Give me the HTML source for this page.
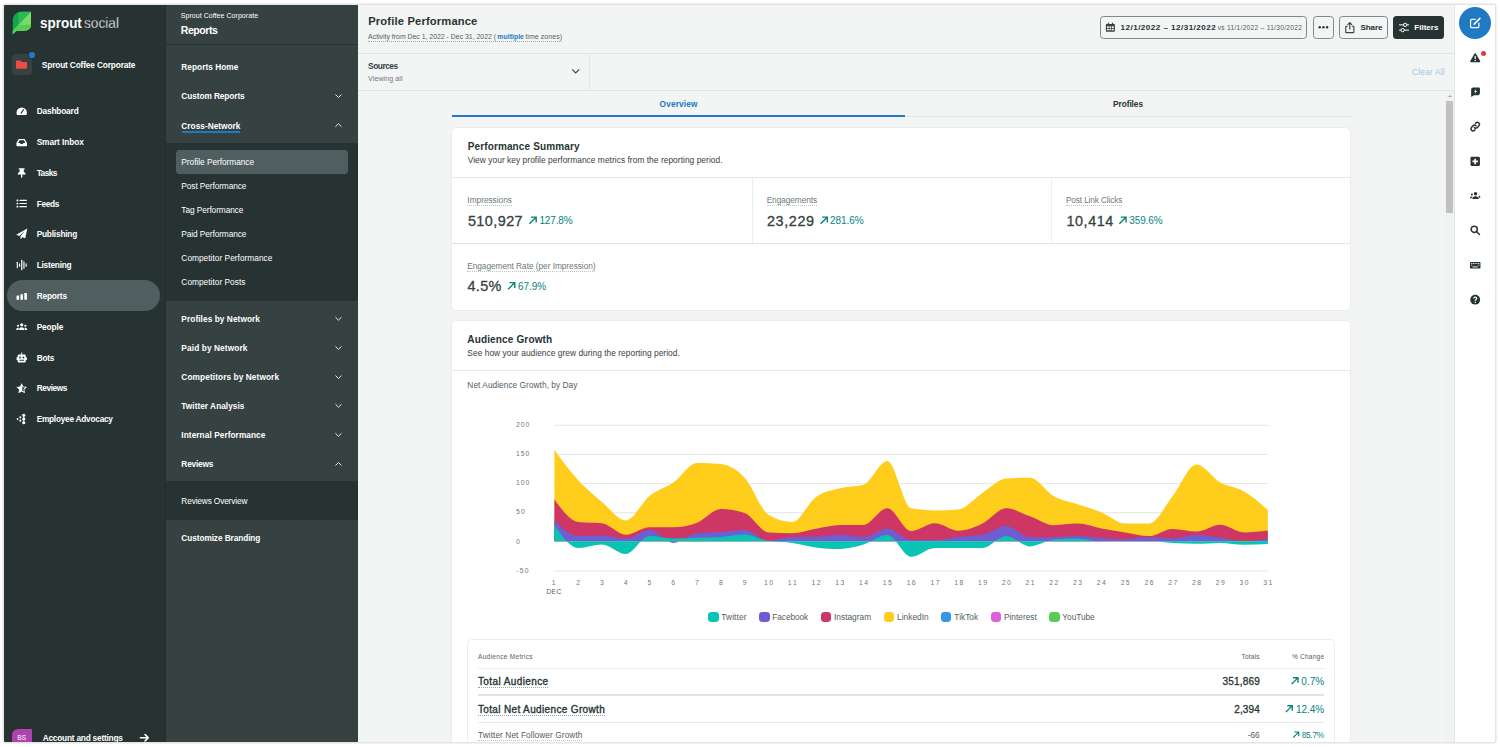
<!DOCTYPE html>
<html lang="en">
<head>
<meta charset="utf-8">
<title>Profile Performance - Sprout Social</title>
<style>
*{box-sizing:border-box}
html,body{margin:0;padding:0;background:#fff}
body{width:1500px;height:747px;overflow:hidden;position:relative;font-family:"Liberation Sans",sans-serif}
#app{position:absolute;left:4px;top:5px;width:1491px;height:737px;overflow:hidden;box-shadow:0 0 0 1.500px #e4e4e4;border-radius:1px}
#pg{position:absolute;left:-4px;top:-5px;width:1500px;height:747px}
#pg div{position:absolute}
.grp{position:static;display:block;margin:0;padding:0}
.t{position:absolute;white-space:pre;margin:0;padding:0;font-weight:400;font-style:normal;text-decoration:none;display:block}
.ic{position:absolute;overflow:visible}
.ul{position:absolute;height:0;border-top:1px dotted #a9b1b1}
.b{position:absolute}
.card{background:#fff;border:1px solid #e8ecec;border-radius:4.500px}
.hl{background:#dee1e1}
.btn{border:1px solid #7f8a8b;border-radius:3.500px}
.sw{position:absolute;width:10.400px;height:10.400px;border-radius:3.400px}
</style>
</head>
<body>
<div id="app"><div id="pg">
<header id="page-header" class="grp" aria-label="Page header">
<div class="b" style="left:358.00px;top:0.00px;width:1096.00px;height:747.00px;background:#f3f4f4;"></div>
<div class="b" style="left:358.00px;top:52.70px;width:1096.00px;height:1.00px;background:#e2e5e5;"></div>
<div class="b" style="left:358.00px;top:89.90px;width:1096.00px;height:1.00px;background:#e2e5e5;"></div>
<div class="b" style="left:588.80px;top:53.70px;width:1.00px;height:36.20px;background:#e3e6e6;"></div>
<svg class="ic" viewBox="0 0 11 11" style="left:571px;top:66px;width:11px;height:11px;"><g transform="translate(0.40 0.90) scale(0.5375 0.5375) translate(-0.00 -0.00)"><path fill="none" stroke="#364141" stroke-width="1.900" d="M1.500 4.800L8 11.200l6.500-6.400"/></g></svg>
<div class="b" style="left:368.40px;top:41.00px;width:193.30px;height:0.00px;background:transparent;border-top:1px dotted #a3acad"></div>
<div class="b btn" style="left:1100.40px;top:16.00px;width:207.10px;height:22.70px;background:transparent;"></div>
<div class="b btn" style="left:1312.70px;top:16.00px;width:21.40px;height:22.70px;background:transparent;"></div>
<div class="b btn" style="left:1339.00px;top:16.00px;width:48.70px;height:22.70px;background:transparent;"></div>
<div class="b" style="left:1393.20px;top:16.00px;width:50.80px;height:22.70px;background:#273333;border-radius:3.500px"></div>
<svg class="ic" viewBox="0 0 12 12" style="left:1105px;top:22px;width:12px;height:12px;"><g transform="translate(0.60 0.50) scale(0.6000 0.6000) translate(-0.00 -0.00)"><path fill="#364141" d="M3.500.5h2v2h5v-2h2v2h1.700c.7 0 1.300.6 1.300 1.300v10.400c0 .7-.6 1.300-1.300 1.300H1.800c-.7 0-1.300-.6-1.300-1.300V3.800c0-.7.600-1.300 1.300-1.300h1.700z"/><g fill="#f3f4f4"><rect x="2.300" y="6.300" width="3" height="2.800"/><rect x="6.500" y="6.300" width="3" height="2.800"/><rect x="10.700" y="6.300" width="3" height="2.800"/><rect x="2.300" y="10.300" width="3" height="2.800"/><rect x="6.500" y="10.300" width="3" height="2.800"/><rect x="10.700" y="10.300" width="3" height="2.800"/></g></g></svg>
<svg class="ic" viewBox="0 0 12 12" style="left:1318px;top:22px;width:12px;height:12px;"><g transform="translate(0.15 0.05) scale(0.6562 0.6562) translate(-0.00 -0.00)"><g fill="#273333"><circle cx="2.400" cy="8" r="1.800"/><circle cx="8" cy="8" r="1.800"/><circle cx="13.600" cy="8" r="1.800"/></g></g></svg>
<svg class="ic" viewBox="0 0 13 14" style="left:1344px;top:21px;width:13px;height:14px;"><g transform="translate(0.20 0.90) scale(0.7000 0.7000) translate(-0.00 -0.00)"><path fill="none" stroke="#364141" stroke-width="1.600" stroke-linejoin="round" d="M5 6.300H3.200c-.6 0-1 .4-1 1v7c0 .6.400 1 1 1h9.600c.6 0 1-.4 1-1v-7c0-.6-.4-1-1-1H11M8 11V1.500M4.800 4.300L8 1.100l3.200 3.200"/></g></svg>
<svg class="ic" viewBox="0 0 13 12" style="left:1398px;top:22px;width:13px;height:12px;"><g transform="translate(0.70 0.20) scale(0.6625 0.6625) translate(-0.00 -0.00)"><g fill="none" stroke="#fff" stroke-width="1.500"><path d="M0.500 4H15.500M0.500 12H15.500"/><circle cx="9.700" cy="4" r="2.500" fill="#273333"/><circle cx="6" cy="12" r="2.500" fill="#273333"/></g></g></svg>
<h1 class="t" style="left:368.25px;top:16px;font-size:11.2px;line-height:11.2px;color:#273333;font-weight:700;letter-spacing:0.154px;">Profile Performance</h1>
<span class="t" style="left:368.12px;top:34px;font-size:6.9px;line-height:6.9px;color:#515e5f;">Activity from Dec 1, 2022 - Dec 31, 2022 (</span>
<span class="t" style="left:497.32px;top:34px;font-size:6.9px;line-height:6.9px;color:#2079c3;font-weight:700;letter-spacing:0.028px;">multiple</span>
<span class="t" style="left:525.32px;top:34px;font-size:6.9px;line-height:6.9px;color:#515e5f;letter-spacing:0.110px;">time zones)</span>
<span class="t" style="left:368.07px;top:62px;font-size:8.3px;line-height:8.3px;color:#364141;font-weight:700;letter-spacing:-0.450px;">Sources</span>
<span class="t" style="left:368.12px;top:75px;font-size:7.0px;line-height:7.0px;color:#6e797a;letter-spacing:0.109px;">Viewing all</span>
<span class="t" style="left:1120.58px;top:24px;font-size:8.1px;line-height:8.1px;color:#273333;font-weight:700;letter-spacing:0.458px;">12/1/2022 – 12/31/2022</span>
<span class="t" style="left:1217.74px;top:25px;font-size:6.6px;line-height:6.6px;color:#515e5f;letter-spacing:0.290px;">vs 11/1/2022 – 11/30/2022</span>
<span class="t" style="left:1360.38px;top:24px;font-size:8.1px;line-height:8.1px;color:#273333;font-weight:700;letter-spacing:-0.093px;">Share</span>
<span class="t" style="left:1414.28px;top:24px;font-size:8.1px;line-height:8.1px;color:#ffffff;font-weight:700;letter-spacing:-0.011px;">Filters</span>
<span class="t" style="left:1412.07px;top:68px;font-size:8.3px;line-height:8.3px;color:#9fc6e4;letter-spacing:0.205px;">Clear All</span>
</header>
<main id="content" class="grp" aria-label="Report">
<div class="b" style="left:905.00px;top:115.60px;width:446.00px;height:1.00px;background:#e2e5e5;"></div>
<div class="b" style="left:452.00px;top:114.70px;width:453.00px;height:2.00px;background:#2079c3;"></div>
<div class="b" style="left:1445.00px;top:90.90px;width:9.00px;height:656.00px;background:#f1f2f2;"></div>
<div class="b" style="left:1446.20px;top:100.50px;width:7.00px;height:112.20px;background:#c1c1c1;"></div>
<div class="b" style="left:1447.50px;top:94.60px;width:0;height:0;border-left:2.200px solid transparent;border-right:2.200px solid transparent;border-bottom:2.600px solid #a3a3a3"></div>
<div class="b card" style="left:451.00px;top:127.00px;width:900.00px;height:184.00px;background:#fff;"></div>
<div class="b" style="left:452.00px;top:176.80px;width:898.00px;height:1.00px;background:#e6eaea;"></div>
<div class="b" style="left:452.00px;top:242.70px;width:898.00px;height:1.00px;background:#dfe6e6;"></div>
<div class="b" style="left:751.50px;top:177.80px;width:1.00px;height:65.00px;background:#eceff0;"></div>
<div class="b" style="left:1050.90px;top:177.80px;width:1.00px;height:65.00px;background:#eceff0;"></div>
<svg class="ic" viewBox="0 0 11 11" style="left:528px;top:215px;width:11px;height:11px;"><g transform="translate(0.40 0.70) scale(0.5750 0.5750) translate(-0.00 -0.00)"><path fill="none" stroke="#08837f" stroke-width="2.500" d="M1.800 14.200L13.300 2.700M4.300 2.500h9.200v9.200"/></g></svg>
<svg class="ic" viewBox="0 0 11 11" style="left:819px;top:215px;width:11px;height:11px;"><g transform="translate(0.60 0.70) scale(0.5750 0.5750) translate(-0.00 -0.00)"><path fill="none" stroke="#08837f" stroke-width="2.500" d="M1.800 14.200L13.300 2.700M4.300 2.500h9.200v9.200"/></g></svg>
<svg class="ic" viewBox="0 0 11 11" style="left:1118px;top:215px;width:11px;height:11px;"><g transform="translate(0.30 0.70) scale(0.5750 0.5750) translate(-0.00 -0.00)"><path fill="none" stroke="#08837f" stroke-width="2.500" d="M1.800 14.200L13.300 2.700M4.300 2.500h9.200v9.200"/></g></svg>
<svg class="ic" viewBox="0 0 11 11" style="left:507px;top:281px;width:11px;height:11px;"><g transform="translate(0.00 0.20) scale(0.5750 0.5750) translate(-0.00 -0.00)"><path fill="none" stroke="#08837f" stroke-width="2.500" d="M1.800 14.200L13.300 2.700M4.300 2.500h9.200v9.200"/></g></svg>
<div class="b card" style="left:451.00px;top:320.00px;width:900.00px;height:440.00px;background:#fff;"></div>
<div class="b" style="left:452.00px;top:369.80px;width:898.00px;height:1.00px;background:#e6eaea;"></div>
<svg class="chart" width="1500" height="747" viewBox="0 0 1500 747" style="position:absolute;left:0;top:0;pointer-events:none"><rect x="554" y="424.80" width="714" height="1" fill="#e4e7e7"/><rect x="554" y="453.95" width="714" height="1" fill="#e4e7e7"/><rect x="554" y="483.10" width="714" height="1" fill="#e4e7e7"/><rect x="554" y="512.20" width="714" height="1" fill="#e4e7e7"/><rect x="554" y="540.20" width="714" height="1" fill="#e4e7e7"/><rect x="554" y="570.50" width="714" height="1" fill="#e4e7e7"/><path d="M554.40,450.00C562.33,460.77 570.25,471.55 578.18,480.20C586.11,488.85 594.03,495.20 601.96,501.90C609.89,508.60 617.81,520.40 625.74,520.40C633.67,520.40 641.59,502.20 649.52,495.90C657.45,489.60 665.37,488.08 673.30,482.60C681.23,477.12 689.15,463.00 697.08,463.00C705.01,463.00 712.93,463.37 720.86,464.10C728.79,464.83 736.71,469.37 744.64,477.80C752.57,486.23 760.49,509.83 768.42,514.70C776.35,519.57 784.27,522.00 792.20,522.00C800.13,522.00 808.05,502.63 815.98,497.00C823.91,491.37 831.83,490.25 839.76,488.20C847.69,486.15 855.61,487.03 863.54,484.70C871.47,482.37 879.39,460.90 887.32,460.90C895.25,460.90 903.17,506.90 911.10,508.30C919.03,509.70 926.95,510.40 934.88,510.40C942.81,510.40 950.73,510.07 958.66,509.40C966.59,508.73 974.51,498.13 982.44,493.00C990.37,487.87 998.29,479.13 1006.22,478.60C1014.15,478.07 1022.07,477.80 1030.00,477.80C1037.93,477.80 1045.85,491.88 1053.78,496.30C1061.71,500.72 1069.63,501.63 1077.56,504.30C1085.49,506.97 1093.41,509.08 1101.34,512.30C1109.27,515.52 1117.19,523.60 1125.12,523.60C1133.05,523.60 1140.97,523.60 1148.90,523.60C1156.83,523.60 1164.75,506.13 1172.68,496.30C1180.61,486.47 1188.53,464.60 1196.46,464.60C1204.39,464.60 1212.31,478.13 1220.24,482.60C1228.17,487.07 1236.09,486.85 1244.02,491.40C1251.95,495.95 1259.87,502.92 1267.80,509.90L1267.80,541.25L554.40,541.25Z" fill="#ffcd1c"/><path d="M554.40,499.50C562.33,510.32 570.25,521.13 578.18,522.00C586.11,522.87 594.03,522.43 601.96,523.30C609.89,524.17 617.81,534.80 625.74,534.80C633.67,534.80 641.59,527.30 649.52,527.30C657.45,527.30 665.37,527.30 673.30,527.30C681.23,527.30 689.15,525.80 697.08,522.80C705.01,519.80 712.93,509.10 720.86,509.10C728.79,509.10 736.71,510.43 744.64,513.10C752.57,515.77 760.49,531.87 768.42,532.40C776.35,532.93 784.27,533.20 792.20,533.20C800.13,533.20 808.05,530.08 815.98,528.70C823.91,527.32 831.83,524.90 839.76,524.90C847.69,524.90 855.61,524.90 863.54,524.90C871.47,524.90 879.39,508.30 887.32,508.30C895.25,508.30 903.17,531.10 911.10,531.10C919.03,531.10 926.95,523.30 934.88,523.30C942.81,523.30 950.73,530.80 958.66,530.80C966.59,530.80 974.51,527.35 982.44,523.60C990.37,519.85 998.29,508.30 1006.22,508.30C1014.15,508.30 1022.07,513.48 1030.00,516.30C1037.93,519.12 1045.85,525.20 1053.78,525.20C1061.71,525.20 1069.63,523.60 1077.56,523.60C1085.49,523.60 1093.41,526.93 1101.34,528.40C1109.27,529.87 1117.19,531.12 1125.12,532.40C1133.05,533.68 1140.97,536.10 1148.90,536.10C1156.83,536.10 1164.75,528.90 1172.68,528.90C1180.61,528.90 1188.53,531.60 1196.46,531.60C1204.39,531.60 1212.31,524.70 1220.24,524.70C1228.17,524.70 1236.09,532.40 1244.02,532.40C1251.95,532.40 1259.87,531.45 1267.80,530.50L1267.80,541.25L554.40,541.25Z" fill="#cd3665"/><path d="M554.40,520.40C562.33,528.20 570.25,536.00 578.18,536.00C586.11,536.00 594.03,535.60 601.96,535.60C609.89,535.60 617.81,538.80 625.74,538.80C633.67,538.80 641.59,530.00 649.52,530.00C657.45,530.00 665.37,542.90 673.30,542.90C681.23,542.90 689.15,533.93 697.08,533.20C705.01,532.47 712.93,532.63 720.86,532.10C728.79,531.57 736.71,530.00 744.64,530.00C752.57,530.00 760.49,540.40 768.42,540.40C776.35,540.40 784.27,536.90 792.20,536.90C800.13,536.90 808.05,536.90 815.98,536.90C823.91,536.90 831.83,534.80 839.76,534.80C847.69,534.80 855.61,537.20 863.54,537.20C871.47,537.20 879.39,528.70 887.32,528.70C895.25,528.70 903.17,540.00 911.10,540.00C919.03,540.00 926.95,540.00 934.88,540.00C942.81,540.00 950.73,537.77 958.66,536.90C966.59,536.03 974.51,536.20 982.44,534.80C990.37,533.40 998.29,526.00 1006.22,526.00C1014.15,526.00 1022.07,537.20 1030.00,537.20C1037.93,537.20 1045.85,537.20 1053.78,537.20C1061.71,537.20 1069.63,536.10 1077.56,536.10C1085.49,536.10 1093.41,537.47 1101.34,538.00C1109.27,538.53 1117.19,539.30 1125.12,539.30C1133.05,539.30 1140.97,537.20 1148.90,537.20C1156.83,537.20 1164.75,538.40 1172.68,538.40C1180.61,538.40 1188.53,535.10 1196.46,535.10C1204.39,535.10 1212.31,536.67 1220.24,537.70C1228.17,538.73 1236.09,541.30 1244.02,541.30C1251.95,541.30 1259.87,540.05 1267.80,538.80L1267.80,541.25L554.40,541.25Z" fill="#6f5ed3"/><path d="M554.40,525.20C562.33,536.60 570.25,548.00 578.18,548.00C586.11,548.00 594.03,544.50 601.96,544.50C609.89,544.50 617.81,554.10 625.74,554.10C633.67,554.10 641.59,536.10 649.52,536.10C657.45,536.10 665.37,538.40 673.30,538.40C681.23,538.40 689.15,537.95 697.08,537.70C705.01,537.45 712.93,537.43 720.86,536.90C728.79,536.37 736.71,534.50 744.64,534.50C752.57,534.50 760.49,539.73 768.42,541.00C776.35,542.27 784.27,541.83 792.20,542.90C800.13,543.97 808.05,546.38 815.98,547.40C823.91,548.42 831.83,549.00 839.76,549.00C847.69,549.00 855.61,546.82 863.54,544.50C871.47,542.18 879.39,535.10 887.32,535.10C895.25,535.10 903.17,556.80 911.10,556.80C919.03,556.80 926.95,548.00 934.88,548.00C942.81,548.00 950.73,548.00 958.66,548.00C966.59,548.00 974.51,548.00 982.44,548.00C990.37,548.00 998.29,536.00 1006.22,536.00C1014.15,536.00 1022.07,546.40 1030.00,546.40C1037.93,546.40 1045.85,540.40 1053.78,539.60C1061.71,538.80 1069.63,538.40 1077.56,538.40C1085.49,538.40 1093.41,541.60 1101.34,541.60C1109.27,541.60 1117.19,541.00 1125.12,541.00C1133.05,541.00 1140.97,541.00 1148.90,541.00C1156.83,541.00 1164.75,542.45 1172.68,542.90C1180.61,543.35 1188.53,543.70 1196.46,543.70C1204.39,543.70 1212.31,542.90 1220.24,542.90C1228.17,542.90 1236.09,544.80 1244.02,544.80C1251.95,544.80 1259.87,544.45 1267.80,544.10L1267.80,541.25L554.40,541.25Z" fill="#08c4b2"/></svg>
<div class="sw" style="left:708.30px;top:612.00px;background:#08c4b2"></div>
<div class="sw" style="left:759.30px;top:612.00px;background:#6f5ed3"></div>
<div class="sw" style="left:820.70px;top:612.00px;background:#cd3665"></div>
<div class="sw" style="left:883.70px;top:612.00px;background:#ffcd1c"></div>
<div class="sw" style="left:941.00px;top:612.00px;background:#3896e3"></div>
<div class="sw" style="left:990.70px;top:612.00px;background:#db61db"></div>
<div class="sw" style="left:1049.30px;top:612.00px;background:#59cb59"></div>
<div class="b card" style="left:467.00px;top:639.00px;width:868.00px;height:120.00px;background:#fff;border-color:#ebeeee"></div>
<div class="b" style="left:478.30px;top:668.00px;width:845.40px;height:1.00px;background:#eceff0;"></div>
<div class="b" style="left:478.30px;top:694.40px;width:845.40px;height:1.30px;background:#dfe4e4;"></div>
<div class="b" style="left:478.30px;top:722.20px;width:845.40px;height:1.00px;background:#e6eaea;"></div>
<svg class="ic" viewBox="0 0 11 11" style="left:1290px;top:676px;width:11px;height:11px;"><g transform="translate(0.70 0.40) scale(0.5375 0.5375) translate(-0.00 -0.00)"><path fill="none" stroke="#08837f" stroke-width="2.500" d="M1.800 14.200L13.300 2.700M4.300 2.500h9.200v9.200"/></g></svg>
<svg class="ic" viewBox="0 0 10 11" style="left:1285px;top:704px;width:10px;height:11px;"><g transform="translate(0.00 0.40) scale(0.5375 0.5375) translate(-0.00 -0.00)"><path fill="none" stroke="#08837f" stroke-width="2.500" d="M1.800 14.200L13.300 2.700M4.300 2.500h9.200v9.200"/></g></svg>
<svg class="ic" viewBox="0 0 9 10" style="left:1292px;top:730px;width:9px;height:10px;"><g transform="translate(0.30 0.80) scale(0.4750 0.4750) translate(-0.00 -0.00)"><path fill="none" stroke="#08837f" stroke-width="2.500" d="M1.800 14.200L13.300 2.700M4.300 2.500h9.200v9.200"/></g></svg>
<span class="t" style="left:659.57px;top:100px;font-size:8.3px;line-height:8.3px;color:#2079c3;font-weight:700;letter-spacing:0.134px;">Overview</span>
<span class="t" style="left:1113.07px;top:100px;font-size:8.3px;line-height:8.3px;color:#273333;font-weight:700;letter-spacing:-0.070px;">Profiles</span>
<h2 class="t" style="left:467.70px;top:142px;font-size:10.0px;line-height:10.0px;color:#273333;font-weight:700;letter-spacing:0.128px;">Performance Summary</h2>
<span class="t" style="left:467.76px;top:156px;font-size:8.4px;line-height:8.4px;color:#364141;letter-spacing:0.039px;">View your key profile performance metrics from the reporting period.</span>
<span class="t" style="left:467.37px;top:196px;font-size:8.3px;line-height:8.3px;color:#6e797a;letter-spacing:-0.019px;">Impressions</span>
<i class="ul" style="left:467.40px;top:205.00px;width:44.40px;border-top-color:#bcc3c3"></i>
<span class="t" style="left:467.92px;top:214px;font-size:14.4px;line-height:14.4px;color:#364141;letter-spacing:0.444px;-webkit-text-stroke:0.3px #364141;">510,927</span>
<span class="t" style="left:539.40px;top:216px;font-size:10.0px;line-height:10.0px;color:#08837f;letter-spacing:-0.144px;">127.8%</span>
<span class="t" style="left:766.67px;top:196px;font-size:8.3px;line-height:8.3px;color:#6e797a;letter-spacing:-0.066px;">Engagements</span>
<i class="ul" style="left:766.70px;top:205.00px;width:50.40px;border-top-color:#bcc3c3"></i>
<span class="t" style="left:766.92px;top:214px;font-size:14.4px;line-height:14.4px;color:#364141;letter-spacing:0.616px;-webkit-text-stroke:0.3px #364141;">23,229</span>
<span class="t" style="left:830.00px;top:216px;font-size:10.0px;line-height:10.0px;color:#08837f;letter-spacing:-0.044px;">281.6%</span>
<span class="t" style="left:1065.97px;top:196px;font-size:8.3px;line-height:8.3px;color:#6e797a;letter-spacing:-0.148px;">Post Link Clicks</span>
<i class="ul" style="left:1066.00px;top:205.00px;width:56.20px;border-top-color:#bcc3c3"></i>
<span class="t" style="left:1066.42px;top:214px;font-size:14.4px;line-height:14.4px;color:#364141;letter-spacing:0.576px;-webkit-text-stroke:0.3px #364141;">10,414</span>
<span class="t" style="left:1129.20px;top:216px;font-size:10.0px;line-height:10.0px;color:#08837f;letter-spacing:-0.084px;">359.6%</span>
<span class="t" style="left:467.17px;top:262px;font-size:8.3px;line-height:8.3px;color:#6e797a;letter-spacing:-0.037px;">Engagement Rate (per Impression)</span>
<i class="ul" style="left:467.20px;top:270.90px;width:128.30px;border-top-color:#bcc3c3"></i>
<span class="t" style="left:467.42px;top:279px;font-size:14.4px;line-height:14.4px;color:#364141;letter-spacing:0.361px;-webkit-text-stroke:0.3px #364141;">4.5%</span>
<span class="t" style="left:517.90px;top:282px;font-size:10.0px;line-height:10.0px;color:#08837f;letter-spacing:-0.040px;">67.9%</span>
<h2 class="t" style="left:467.30px;top:335px;font-size:10.0px;line-height:10.0px;color:#273333;font-weight:700;letter-spacing:0.150px;">Audience Growth</h2>
<span class="t" style="left:467.36px;top:349px;font-size:8.4px;line-height:8.4px;color:#364141;letter-spacing:0.027px;">See how your audience grew during the reporting period.</span>
<h3 class="t" style="left:467.37px;top:381px;font-size:8.3px;line-height:8.3px;color:#515e5f;letter-spacing:0.046px;">Net Audience Growth, by Day</h3>
<span class="t" style="left:515.93px;top:422px;font-size:6.8px;line-height:6.8px;color:#6e797a;letter-spacing:0.984px;">200</span>
<span class="t" style="left:515.93px;top:451px;font-size:6.8px;line-height:6.8px;color:#6e797a;letter-spacing:0.984px;">150</span>
<span class="t" style="left:515.93px;top:480px;font-size:6.8px;line-height:6.8px;color:#6e797a;letter-spacing:0.984px;">100</span>
<span class="t" style="left:515.93px;top:509px;font-size:6.8px;line-height:6.8px;color:#6e797a;letter-spacing:1.350px;">50</span>
<span class="t" style="left:515.93px;top:539px;font-size:6.8px;line-height:6.8px;color:#6e797a;">0</span>
<span class="t" style="left:516.23px;top:568px;font-size:6.8px;line-height:6.8px;color:#6e797a;letter-spacing:1.192px;">-50</span>
<span class="t" style="left:551.83px;top:580px;font-size:6.8px;line-height:6.8px;color:#6e797a;">1</span>
<span class="t" style="left:576.21px;top:580px;font-size:6.8px;line-height:6.8px;color:#6e797a;">2</span>
<span class="t" style="left:599.99px;top:580px;font-size:6.8px;line-height:6.8px;color:#6e797a;">3</span>
<span class="t" style="left:623.77px;top:580px;font-size:6.8px;line-height:6.8px;color:#6e797a;">4</span>
<span class="t" style="left:647.55px;top:580px;font-size:6.8px;line-height:6.8px;color:#6e797a;">5</span>
<span class="t" style="left:671.33px;top:580px;font-size:6.8px;line-height:6.8px;color:#6e797a;">6</span>
<span class="t" style="left:695.11px;top:580px;font-size:6.8px;line-height:6.8px;color:#6e797a;">7</span>
<span class="t" style="left:718.89px;top:580px;font-size:6.8px;line-height:6.8px;color:#6e797a;">8</span>
<span class="t" style="left:742.67px;top:580px;font-size:6.8px;line-height:6.8px;color:#6e797a;">9</span>
<span class="t" style="left:763.95px;top:580px;font-size:6.8px;line-height:6.8px;color:#6e797a;letter-spacing:1.450px;">10</span>
<span class="t" style="left:787.73px;top:580px;font-size:6.8px;line-height:6.8px;color:#6e797a;letter-spacing:1.950px;">11</span>
<span class="t" style="left:811.51px;top:580px;font-size:6.8px;line-height:6.8px;color:#6e797a;letter-spacing:1.450px;">12</span>
<span class="t" style="left:835.29px;top:580px;font-size:6.8px;line-height:6.8px;color:#6e797a;letter-spacing:1.450px;">13</span>
<span class="t" style="left:859.07px;top:580px;font-size:6.8px;line-height:6.8px;color:#6e797a;letter-spacing:1.450px;">14</span>
<span class="t" style="left:882.85px;top:580px;font-size:6.8px;line-height:6.8px;color:#6e797a;letter-spacing:1.450px;">15</span>
<span class="t" style="left:906.63px;top:580px;font-size:6.8px;line-height:6.8px;color:#6e797a;letter-spacing:1.450px;">16</span>
<span class="t" style="left:930.41px;top:580px;font-size:6.8px;line-height:6.8px;color:#6e797a;letter-spacing:1.450px;">17</span>
<span class="t" style="left:954.19px;top:580px;font-size:6.8px;line-height:6.8px;color:#6e797a;letter-spacing:1.450px;">18</span>
<span class="t" style="left:977.97px;top:580px;font-size:6.8px;line-height:6.8px;color:#6e797a;letter-spacing:1.450px;">19</span>
<span class="t" style="left:1001.75px;top:580px;font-size:6.8px;line-height:6.8px;color:#6e797a;letter-spacing:1.450px;">20</span>
<span class="t" style="left:1025.53px;top:580px;font-size:6.8px;line-height:6.8px;color:#6e797a;letter-spacing:1.450px;">21</span>
<span class="t" style="left:1049.31px;top:580px;font-size:6.8px;line-height:6.8px;color:#6e797a;letter-spacing:1.450px;">22</span>
<span class="t" style="left:1073.09px;top:580px;font-size:6.8px;line-height:6.8px;color:#6e797a;letter-spacing:1.450px;">23</span>
<span class="t" style="left:1096.87px;top:580px;font-size:6.8px;line-height:6.8px;color:#6e797a;letter-spacing:1.450px;">24</span>
<span class="t" style="left:1120.65px;top:580px;font-size:6.8px;line-height:6.8px;color:#6e797a;letter-spacing:1.450px;">25</span>
<span class="t" style="left:1144.43px;top:580px;font-size:6.8px;line-height:6.8px;color:#6e797a;letter-spacing:1.450px;">26</span>
<span class="t" style="left:1168.21px;top:580px;font-size:6.8px;line-height:6.8px;color:#6e797a;letter-spacing:1.450px;">27</span>
<span class="t" style="left:1191.99px;top:580px;font-size:6.8px;line-height:6.8px;color:#6e797a;letter-spacing:1.450px;">28</span>
<span class="t" style="left:1215.77px;top:580px;font-size:6.8px;line-height:6.8px;color:#6e797a;letter-spacing:1.450px;">29</span>
<span class="t" style="left:1239.55px;top:580px;font-size:6.8px;line-height:6.8px;color:#6e797a;letter-spacing:1.450px;">30</span>
<span class="t" style="left:1263.33px;top:580px;font-size:6.8px;line-height:6.8px;color:#6e797a;letter-spacing:1.450px;">31</span>
<span class="t" style="left:546.43px;top:589px;font-size:6.8px;line-height:6.8px;color:#515e5f;letter-spacing:0.276px;">DEC</span>
<span class="t" style="left:721.37px;top:613px;font-size:8.3px;line-height:8.3px;color:#515e5f;letter-spacing:0.102px;">Twitter</span>
<span class="t" style="left:772.37px;top:613px;font-size:8.3px;line-height:8.3px;color:#515e5f;letter-spacing:-0.099px;">Facebook</span>
<span class="t" style="left:833.97px;top:613px;font-size:8.3px;line-height:8.3px;color:#515e5f;letter-spacing:0.032px;">Instagram</span>
<span class="t" style="left:896.97px;top:613px;font-size:8.3px;line-height:8.3px;color:#515e5f;letter-spacing:0.053px;">LinkedIn</span>
<span class="t" style="left:954.37px;top:613px;font-size:8.3px;line-height:8.3px;color:#515e5f;letter-spacing:0.015px;">TikTok</span>
<span class="t" style="left:1003.97px;top:613px;font-size:8.3px;line-height:8.3px;color:#515e5f;">Pinterest</span>
<span class="t" style="left:1062.37px;top:613px;font-size:8.3px;line-height:8.3px;color:#515e5f;letter-spacing:-0.044px;">YouTube</span>
<span class="t" style="left:478.04px;top:654px;font-size:6.5px;line-height:6.5px;color:#515e5f;letter-spacing:0.315px;">Audience Metrics</span>
<span class="t" style="left:1241.44px;top:654px;font-size:6.5px;line-height:6.5px;color:#515e5f;letter-spacing:0.240px;">Totals</span>
<span class="t" style="left:1292.04px;top:654px;font-size:6.5px;line-height:6.5px;color:#515e5f;letter-spacing:0.232px;">% Change</span>
<span class="t" style="left:477.90px;top:677px;font-size:10.0px;line-height:10.0px;color:#273333;letter-spacing:0.403px;-webkit-text-stroke:0.35px #273333;">Total Audience</span>
<i class="ul" style="left:478.00px;top:687.20px;width:70.00px;border-top-color:#9aa4a5"></i>
<span class="t" style="left:1222.60px;top:677px;font-size:10.0px;line-height:10.0px;color:#273333;letter-spacing:0.174px;-webkit-text-stroke:0.3px #273333;">351,869</span>
<span class="t" style="left:1301.30px;top:677px;font-size:10.0px;line-height:10.0px;color:#08837f;letter-spacing:0.034px;">0.7%</span>
<span class="t" style="left:477.90px;top:705px;font-size:10.0px;line-height:10.0px;color:#273333;letter-spacing:0.354px;-webkit-text-stroke:0.35px #273333;">Total Net Audience Growth</span>
<i class="ul" style="left:478.00px;top:715.20px;width:126.60px;border-top-color:#9aa4a5"></i>
<span class="t" style="left:1234.30px;top:705px;font-size:10.0px;line-height:10.0px;color:#273333;letter-spacing:0.117px;-webkit-text-stroke:0.3px #273333;">2,394</span>
<span class="t" style="left:1295.90px;top:705px;font-size:10.0px;line-height:10.0px;color:#08837f;letter-spacing:-0.015px;">12.4%</span>
<span class="t" style="left:477.97px;top:731px;font-size:8.3px;line-height:8.3px;color:#515e5f;letter-spacing:0.080px;">Twitter Net Follower Growth</span>
<i class="ul" style="left:478.00px;top:740.00px;width:104.30px;border-top-color:#bcc3c3"></i>
<span class="t" style="left:1247.67px;top:731px;font-size:8.3px;line-height:8.3px;color:#515e5f;letter-spacing:0.024px;">-66</span>
<span class="t" style="left:1301.67px;top:731px;font-size:8.3px;line-height:8.3px;color:#08837f;letter-spacing:-0.271px;">85.7%</span>
</main>
<nav id="primary-nav" class="grp" aria-label="Primary">
<div class="b" style="left:0.00px;top:0.00px;width:166.00px;height:747.00px;background:#273333;"></div>
<div class="b" style="left:6.60px;top:279.90px;width:153.40px;height:31.10px;background:#515e5f;border-radius:15.600px"></div>
<div class="b" style="left:12.00px;top:54.00px;width:20.00px;height:20.70px;background:#364141;border-radius:3.500px"></div>
<svg class="ic" viewBox="0 0 12 13" style="left:16px;top:59px;width:12px;height:13px;"><g transform="translate(0.00 0.20) scale(0.6875 0.6875) translate(-0.00 -0.00)"><path fill="#ed4c42" d="M1.200 2h5.300l1.600 2h6.700c.7 0 1.200.5 1.200 1.200v7.600c0 .7-.5 1.200-1.200 1.200H1.200C.5 14 0 13.500 0 12.800V3.200C0 2.500.5 2 1.200 2z"/></g></svg>
<div class="b" style="left:28.90px;top:51.90px;width:5.70px;height:5.70px;background:#2079c3;border-radius:50%;box-shadow:0 0 0 .8px #273333"></div>
<div class="b" style="left:12.00px;top:728.80px;width:19.70px;height:20.00px;background:#ae42ae;border-radius:6px 0 0 0"></div>
<svg class="ic" viewBox="0 0 20 24" style="left:12px;top:11px;width:20px;height:24px;"><g transform="translate(0.80 0.80) scale(0.9838 1.0183) translate(-0.00 -0.00)"><path fill="#0fa84b" d="M0 8.500C0 3.500 3.500 0 8.500 0H18.500V12.800C18.500 16.500 15.500 18.600 12 18.600H4L0 21.800z"/><path fill="#2fb856" d="M18.500 0H8.500C7.500 0 6.500.2 5.700.5L5.700 12.800 18.500 0z"/><path fill="#75dd66" d="M18.500 0L0 18.500V21.800L4 18.600H12C15.500 18.600 18.500 16.500 18.500 12.800z"/><path fill="#59cb59" d="M5.900 12.600L0 18.500V21.800L4 18.600H12C15.500 18.600 18.500 16.500 18.500 12.800V12.600z"/></g></svg>
<svg class="ic" viewBox="0 0 13 13" style="left:16px;top:105px;width:13px;height:13px;"><g transform="translate(0.20 0.60) scale(0.6875 0.6875) translate(-0.00 -0.00)"><path fill="#fff" d="M8 2.6a7.6 7.6 0 0 0-7.6 7.6c0 1.3.3 2.4.9 3.4h13.4c.6-1 .9-2.100.9-3.400A7.600 7.600 0 0 0 8 2.600z"/><path stroke="#273333" stroke-width="1.700" stroke-linecap="round" d="M7.300 11l3.300-5"/></g></svg>
<svg class="ic" viewBox="0 0 13 13" style="left:16px;top:136px;width:13px;height:13px;"><g transform="translate(0.20 0.70) scale(0.6875 0.6875) translate(-0.00 -0.00)"><path fill="#fff" d="M3.700 3.400h8.600l3.400 5.800v3.600c0 .7-.5 1.200-1.200 1.200H1.500c-.7 0-1.200-.5-1.200-1.200V9.200z"/><path fill="#273333" d="M4.800 5.300h6.400l2.100 3.700h-2.900l-.9 1.700h-3l-.9-1.700H2.700z"/></g></svg>
<svg class="ic" viewBox="0 0 12 13" style="left:16px;top:167px;width:12px;height:13px;"><g transform="translate(0.40 0.60) scale(0.6625 0.6625) translate(-0.00 -0.00)"><path fill="#fff" d="M3.600 1h8.800v2h-1.500l.5 3.800c1.600.8 2.600 2.100 2.600 3.700H9v3.600L8 16l-1-1.900v-3.600H2c0-1.600 1-2.900 2.600-3.700l.5-3.800H3.600z"/></g></svg>
<svg class="ic" viewBox="0 0 13 12" style="left:16px;top:198px;width:13px;height:12px;"><g transform="translate(0.20 0.00) scale(0.6875 0.6875) translate(-0.00 -0.00)"><g fill="#fff"><rect x="0.500" y="2.300" width="2.600" height="2.400" rx=".5"/><rect x="0.500" y="6.800" width="2.600" height="2.400" rx=".5"/><rect x="0.500" y="11.300" width="2.600" height="2.400" rx=".5"/><rect x="4.800" y="2.700" width="10.700" height="1.700" rx=".4"/><rect x="4.800" y="7.200" width="10.700" height="1.700" rx=".4"/><rect x="4.800" y="11.700" width="10.700" height="1.700" rx=".4"/></g></g></svg>
<svg class="ic" viewBox="0 0 14 13" style="left:15px;top:228px;width:14px;height:13px;"><g transform="translate(0.80 0.10) scale(0.7375 0.7375) translate(-0.00 -0.00)"><path fill="#fff" d="M15.600.6L.6 8.900l4.300 1.800L12.400 3.600 6.300 11.300v3.900l2.700-2.900 3.800 1.600z"/></g></svg>
<svg class="ic" viewBox="0 0 13 13" style="left:16px;top:259px;width:13px;height:13px;"><g transform="translate(0.00 0.30) scale(0.7125 0.7125) translate(-0.00 -0.00)"><g fill="#fff"><rect x="1.050" y="3.400" width="1.600" height="9.300" rx=".8"/><rect x="4.150" y="5.700" width="1.600" height="4.700" rx=".8"/><rect x="7.200" y="0.500" width="1.700" height="15" rx=".8"/><rect x="10.350" y="2.800" width="1.600" height="10.500" rx=".8"/><rect x="13.400" y="5.500" width="1.600" height="5.200" rx=".8"/></g></g></svg>
<svg class="ic" viewBox="0 0 13 13" style="left:16px;top:290px;width:13px;height:13px;"><g transform="translate(0.20 0.70) scale(0.6875 0.6875) translate(-0.00 -0.00)"><g fill="#fff"><rect x="0.500" y="6.800" width="3.700" height="6.400" rx=".8"/><rect x="6.100" y="5" width="3.800" height="8.200" rx=".8"/><rect x="11.800" y="3.400" width="3.800" height="9.800" rx=".8"/></g></g></svg>
<svg class="ic" viewBox="0 0 13 13" style="left:16px;top:321px;width:13px;height:13px;"><g transform="translate(0.20 0.40) scale(0.6875 0.6875) translate(-0.00 -0.00)"><g fill="#fff"><circle cx="8" cy="5" r="2.300"/><path d="M4 12.500c0-2.400 1.700-4 4-4s4 1.600 4 4z"/><circle cx="2.700" cy="6.300" r="1.600"/><path d="M0 12.500c0-1.900 1-3.300 2.700-3.300.6 0 1.100.2 1.500.5-.8.800-1.200 1.800-1.200 2.800z"/><circle cx="13.300" cy="6.300" r="1.600"/><path d="M16 12.500c0-1.900-1-3.300-2.700-3.300-.6 0-1.100.2-1.500.5.800.8 1.200 1.800 1.200 2.800z"/></g></g></svg>
<svg class="ic" viewBox="0 0 13 13" style="left:16px;top:352px;width:13px;height:13px;"><g transform="translate(0.20 0.20) scale(0.6875 0.6875) translate(-0.00 -0.00)"><path fill="#fff" d="M7.300.5h1.400v2.700h3.400c1 0 1.800.8 1.800 1.800v2.200h1.600v4.300h-1.600v1.700c0 1-.8 1.800-1.800 1.800H3.900c-1 0-1.800-.8-1.800-1.800v-1.700H.5V7.200h1.600V5c0-1 .8-1.800 1.800-1.800h3.400z"/><circle fill="#273333" cx="5.500" cy="7.700" r="1.300"/><circle fill="#273333" cx="10.500" cy="7.700" r="1.300"/><rect fill="#273333" x="4.700" y="11" width="6.600" height="1.400"/></g></svg>
<svg class="ic" viewBox="0 0 13 13" style="left:16px;top:382px;width:13px;height:13px;"><g transform="translate(0.20 0.80) scale(0.6875 0.6875) translate(-0.00 -0.00)"><path fill="#fff" d="M8 .5l2.400 4.900 5.300.7-3.900 3.700.9 5.300L8 12.600 3.300 15.100l.9-5.300L.3 6.100l5.300-.7z"/><path fill="#273333" d="M8.900 4.300l.8 2.100 3.300.5-2.400 2.300.6 3.400-2.300-1.200z"/></g></svg>
<svg class="ic" viewBox="0 0 13 13" style="left:16px;top:413px;width:13px;height:13px;"><g transform="translate(0.20 0.50) scale(0.6875 0.6875) translate(-0.00 -0.00)"><g fill="#fff"><circle cx="11" cy="2.600" r="2.300"/><circle cx="11" cy="8" r="2.300"/><circle cx="11" cy="13.400" r="2.300"/><circle cx="6" cy="5.600" r="1.500"/><circle cx="6" cy="10.400" r="1.500"/><circle cx="2" cy="8" r="1.300"/><rect x="10.300" y="2.600" width="1.400" height="10.800"/></g></g></svg>
<svg class="ic" viewBox="0 0 12 12" style="left:139px;top:732px;width:12px;height:12px;"><g transform="translate(0.50 0.70) scale(0.6250 0.6250) translate(-0.00 -0.00)"><path fill="none" stroke="#fff" stroke-width="2.500" stroke-linecap="round" stroke-linejoin="round" d="M1.500 8h12.500M9 3l5 5-5 5"/></g></svg>
<span class="t" style="left:39.69px;top:15px;font-size:15.2px;line-height:15.2px;color:#ffffff;font-weight:700;transform:scaleX(.885);transform-origin:0 0;">sprout</span>
<span class="t" style="left:84.29px;top:15px;font-size:15.2px;line-height:15.2px;color:#ffffff;transform:scaleX(.9);transform-origin:0 0;-webkit-text-stroke:0.35px #273333;">social</span>
<span class="t" style="left:41.87px;top:61px;font-size:8.3px;line-height:8.3px;color:#ffffff;font-weight:700;letter-spacing:-0.148px;">Sprout Coffee Corporate</span>
<a class="t" style="left:36.67px;top:107px;font-size:8.3px;line-height:8.3px;color:#ffffff;font-weight:700;letter-spacing:-0.162px;">Dashboard</a>
<a class="t" style="left:36.67px;top:138px;font-size:8.3px;line-height:8.3px;color:#ffffff;font-weight:700;letter-spacing:-0.081px;">Smart Inbox</a>
<a class="t" style="left:36.67px;top:169px;font-size:8.3px;line-height:8.3px;color:#ffffff;font-weight:700;letter-spacing:-0.544px;">Tasks</a>
<a class="t" style="left:36.67px;top:200px;font-size:8.3px;line-height:8.3px;color:#ffffff;font-weight:700;letter-spacing:-0.309px;">Feeds</a>
<a class="t" style="left:36.67px;top:230px;font-size:8.3px;line-height:8.3px;color:#ffffff;font-weight:700;letter-spacing:-0.195px;">Publishing</a>
<a class="t" style="left:36.67px;top:261px;font-size:8.3px;line-height:8.3px;color:#ffffff;font-weight:700;letter-spacing:-0.241px;">Listening</a>
<a class="t" style="left:36.67px;top:292px;font-size:8.3px;line-height:8.3px;color:#ffffff;font-weight:700;letter-spacing:-0.169px;">Reports</a>
<a class="t" style="left:36.67px;top:323px;font-size:8.3px;line-height:8.3px;color:#ffffff;font-weight:700;letter-spacing:-0.094px;">People</a>
<a class="t" style="left:36.67px;top:354px;font-size:8.3px;line-height:8.3px;color:#ffffff;font-weight:700;letter-spacing:-0.230px;">Bots</a>
<a class="t" style="left:36.67px;top:384px;font-size:8.3px;line-height:8.3px;color:#ffffff;font-weight:700;letter-spacing:-0.412px;">Reviews</a>
<a class="t" style="left:36.67px;top:415px;font-size:8.3px;line-height:8.3px;color:#ffffff;font-weight:700;letter-spacing:-0.254px;">Employee Advocacy</a>
<span class="t" style="left:17.34px;top:735px;font-size:6.6px;line-height:6.6px;color:#ffffff;">BS</span>
<span class="t" style="left:42.67px;top:734px;font-size:8.3px;line-height:8.3px;color:#ffffff;font-weight:700;letter-spacing:-0.216px;">Account and settings</span>
</nav>
<nav id="reports-nav" class="grp" aria-label="Reports">
<div class="b" style="left:166.00px;top:0.00px;width:192.00px;height:747.00px;background:#364141;"></div>
<div class="b" style="left:166.00px;top:43.60px;width:192.00px;height:1.00px;background:#273333;"></div>
<div class="b" style="left:165.00px;top:0.00px;width:1.00px;height:747.00px;background:#222d2d;"></div>
<div class="b" style="left:166.00px;top:142.60px;width:192.00px;height:158.10px;background:#273333;"></div>
<div class="b" style="left:166.00px;top:481.00px;width:192.00px;height:38.80px;background:#273333;"></div>
<div class="b" style="left:176.00px;top:150.00px;width:171.80px;height:23.90px;background:#515e5f;border-radius:3.500px"></div>
<div class="b" style="left:181.70px;top:131.40px;width:58.40px;height:1.40px;background:#2079c3;"></div>
<svg class="ic" viewBox="0 0 10 9" style="left:334px;top:92px;width:10px;height:9px;"><g transform="translate(0.80 0.30) scale(0.4625 0.4625) translate(-0.00 -0.00)"><path fill="none" stroke="#fff" stroke-width="1.900" d="M1.500 4.800L8 11.200l6.500-6.400"/></g></svg>
<svg class="ic" viewBox="0 0 10 9" style="left:334px;top:121px;width:10px;height:9px;"><g transform="translate(0.80 0.50) scale(0.4625 0.4625) translate(-0.00 -0.00)"><path fill="none" stroke="#fff" stroke-width="1.900" d="M1.500 11.200L8 4.800l6.500 6.400"/></g></svg>
<svg class="ic" viewBox="0 0 10 9" style="left:334px;top:315px;width:10px;height:9px;"><g transform="translate(0.80 0.00) scale(0.4625 0.4625) translate(-0.00 -0.00)"><path fill="none" stroke="#fff" stroke-width="1.900" d="M1.500 4.800L8 11.200l6.500-6.400"/></g></svg>
<svg class="ic" viewBox="0 0 10 9" style="left:334px;top:344px;width:10px;height:9px;"><g transform="translate(0.80 0.20) scale(0.4625 0.4625) translate(-0.00 -0.00)"><path fill="none" stroke="#fff" stroke-width="1.900" d="M1.500 4.800L8 11.200l6.500-6.400"/></g></svg>
<svg class="ic" viewBox="0 0 10 9" style="left:334px;top:373px;width:10px;height:9px;"><g transform="translate(0.80 0.30) scale(0.4625 0.4625) translate(-0.00 -0.00)"><path fill="none" stroke="#fff" stroke-width="1.900" d="M1.500 4.800L8 11.200l6.500-6.400"/></g></svg>
<svg class="ic" viewBox="0 0 10 9" style="left:334px;top:402px;width:10px;height:9px;"><g transform="translate(0.80 0.00) scale(0.4625 0.4625) translate(-0.00 -0.00)"><path fill="none" stroke="#fff" stroke-width="1.900" d="M1.500 4.800L8 11.200l6.500-6.400"/></g></svg>
<svg class="ic" viewBox="0 0 10 9" style="left:334px;top:431px;width:10px;height:9px;"><g transform="translate(0.80 0.10) scale(0.4625 0.4625) translate(-0.00 -0.00)"><path fill="none" stroke="#fff" stroke-width="1.900" d="M1.500 4.800L8 11.200l6.500-6.400"/></g></svg>
<svg class="ic" viewBox="0 0 10 9" style="left:334px;top:460px;width:10px;height:9px;"><g transform="translate(0.80 0.30) scale(0.4625 0.4625) translate(-0.00 -0.00)"><path fill="none" stroke="#fff" stroke-width="1.900" d="M1.500 11.200L8 4.800l6.500 6.400"/></g></svg>
<span class="t" style="left:180.72px;top:12px;font-size:7.0px;line-height:7.0px;color:#ffffff;letter-spacing:0.054px;">Sprout Coffee Corporate</span>
<h2 class="t" style="left:180.78px;top:25px;font-size:10.6px;line-height:10.6px;color:#ffffff;font-weight:700;letter-spacing:-0.496px;">Reports</h2>
<a class="t" style="left:181.37px;top:63px;font-size:8.3px;line-height:8.3px;color:#ffffff;font-weight:700;letter-spacing:0.021px;">Reports Home</a>
<a class="t" style="left:181.37px;top:92px;font-size:8.3px;line-height:8.3px;color:#ffffff;font-weight:700;letter-spacing:-0.092px;">Custom Reports</a>
<a class="t" style="left:181.37px;top:122px;font-size:8.3px;line-height:8.3px;color:#ffffff;font-weight:700;">Cross-Network</a>
<a class="t" style="left:181.37px;top:315px;font-size:8.3px;line-height:8.3px;color:#ffffff;font-weight:700;letter-spacing:0.065px;">Profiles by Network</a>
<a class="t" style="left:181.37px;top:344px;font-size:8.3px;line-height:8.3px;color:#ffffff;font-weight:700;letter-spacing:0.106px;">Paid by Network</a>
<a class="t" style="left:181.37px;top:373px;font-size:8.3px;line-height:8.3px;color:#ffffff;font-weight:700;letter-spacing:0.084px;">Competitors by Network</a>
<a class="t" style="left:181.37px;top:402px;font-size:8.3px;line-height:8.3px;color:#ffffff;font-weight:700;letter-spacing:0.022px;">Twitter Analysis</a>
<a class="t" style="left:181.37px;top:431px;font-size:8.3px;line-height:8.3px;color:#ffffff;font-weight:700;letter-spacing:0.055px;">Internal Performance</a>
<a class="t" style="left:181.37px;top:460px;font-size:8.3px;line-height:8.3px;color:#ffffff;font-weight:700;letter-spacing:-0.195px;">Reviews</a>
<a class="t" style="left:181.37px;top:534px;font-size:8.3px;line-height:8.3px;color:#ffffff;font-weight:700;letter-spacing:-0.096px;">Customize Branding</a>
<a class="t" style="left:181.37px;top:158px;font-size:8.3px;line-height:8.3px;color:#ffffff;letter-spacing:-0.032px;">Profile Performance</a>
<a class="t" style="left:181.37px;top:182px;font-size:8.3px;line-height:8.3px;color:#ffffff;letter-spacing:-0.091px;">Post Performance</a>
<a class="t" style="left:181.37px;top:206px;font-size:8.3px;line-height:8.3px;color:#ffffff;letter-spacing:-0.081px;">Tag Performance</a>
<a class="t" style="left:181.37px;top:230px;font-size:8.3px;line-height:8.3px;color:#ffffff;letter-spacing:-0.092px;">Paid Performance</a>
<a class="t" style="left:181.37px;top:254px;font-size:8.3px;line-height:8.3px;color:#ffffff;letter-spacing:0.031px;">Competitor Performance</a>
<a class="t" style="left:181.37px;top:278px;font-size:8.3px;line-height:8.3px;color:#ffffff;letter-spacing:0.027px;">Competitor Posts</a>
<a class="t" style="left:181.37px;top:497px;font-size:8.3px;line-height:8.3px;color:#ffffff;letter-spacing:-0.147px;">Reviews Overview</a>
</nav>
<aside id="quick-actions" class="grp" aria-label="Quick actions">
<div class="b" style="left:1454.00px;top:0.00px;width:46.00px;height:747.00px;background:#ffffff;"></div>
<div class="b" style="left:1454.00px;top:0.00px;width:1.00px;height:747.00px;background:#e4e7e7;"></div>
<div class="b" style="left:1459.10px;top:6.90px;width:32.20px;height:32.20px;background:#2079c3;border-radius:50%"></div>
<svg class="ic" viewBox="0 0 13 13" style="left:1469px;top:17px;width:13px;height:13px;"><g transform="translate(0.50 0.00) scale(0.7125 0.7125) translate(-0.00 -0.00)"><g fill="none" stroke="#fff" stroke-linecap="round" stroke-linejoin="round"><path stroke-width="1.700" d="M13.200 8.500v4.700c0 1-.8 1.800-1.800 1.800H3.300c-1 0-1.800-.8-1.800-1.800V5.100c0-1 .8-1.800 1.800-1.800H8"/><path stroke-width="2.200" d="M6.500 10L14.600 1.900"/></g></g></svg>
<svg class="ic" viewBox="0 0 13 13" style="left:1469px;top:52px;width:13px;height:13px;"><g transform="translate(0.95 0.65) scale(0.6562 0.6562) translate(-0.00 -0.00)"><path fill="#273333" d="M8 .8c.5 0 .9.300 1.200.7l6.300 11.300c.5.900-.1 2-1.200 2H1.700c-1.100 0-1.700-1.100-1.200-2L6.800 1.500C7.100 1.100 7.500.8 8 .8z"/><rect fill="#ffffff" x="7.100" y="5" width="1.800" height="5"/><rect fill="#ffffff" x="7.100" y="11.200" width="1.800" height="1.800"/></g></svg>
<svg class="ic" viewBox="0 0 13 13" style="left:1469px;top:86px;width:13px;height:13px;"><g transform="translate(0.95 0.75) scale(0.6562 0.6562) translate(-0.00 -0.00)"><path fill="#273333" d="M5 1.200h8.800c.8 0 1.400.6 1.400 1.400v6.400c0 2.300-1.700 4-4 4H6.200L1.800 15.800V4.400C1.800 2.600 3.200 1.200 5 1.200z"/><path fill="#ffffff" d="M9.700 3.200L6.200 7.600h2.200L7.300 11l3.600-4.400H8.700z"/></g></svg>
<svg class="ic" viewBox="0 0 13 12" style="left:1469px;top:121px;width:13px;height:12px;"><g transform="translate(0.95 0.35) scale(0.6562 0.6562) translate(-0.00 -0.00)"><g fill="none" stroke="#273333" stroke-width="2.300" stroke-linecap="round"><path d="M6.700 9.300a3.200 3.200 0 0 0 4.500 0l2.600-2.600a3.200 3.200 0 0 0-4.500-4.500L8.500 3"/><path d="M9.300 6.700a3.200 3.200 0 0 0-4.500 0L2.200 9.300a3.200 3.200 0 0 0 4.500 4.500L7.500 13"/></g></g></svg>
<svg class="ic" viewBox="0 0 13 12" style="left:1469px;top:156px;width:13px;height:12px;"><g transform="translate(0.95 0.15) scale(0.6562 0.6562) translate(-0.00 -0.00)"><rect fill="#273333" x="0.800" y="0.800" width="14.400" height="14.400" rx="2.200"/><path stroke="#ffffff" stroke-width="2.600" d="M8 3.800v8.400M3.800 8h8.400"/></g></svg>
<svg class="ic" viewBox="0 0 13 13" style="left:1469px;top:190px;width:13px;height:13px;"><g transform="translate(0.95 0.75) scale(0.6562 0.6562) translate(-0.00 -0.00)"><g fill="#273333"><circle cx="8.500" cy="4.500" r="2.600"/><path d="M3.500 12.500c0-2.600 2-4.200 5-4.200s5 1.600 5 4.200z"/><circle cx="3" cy="5.800" r="1.500"/><path d="M0 11.500c0-1.600 1-2.800 2.600-2.800.5 0 .9.100 1.300.4-.8.700-1.300 1.500-1.400 2.400z"/><rect x="12.800" y="8.800" width="3.200" height="1.200"/><rect x="13.800" y="7.800" width="1.200" height="3.200"/></g></g></svg>
<svg class="ic" viewBox="0 0 13 12" style="left:1469px;top:225px;width:13px;height:12px;"><g transform="translate(0.95 0.05) scale(0.6562 0.6562) translate(-0.00 -0.00)"><g fill="none" stroke="#273333" stroke-width="2.300"><circle cx="6.500" cy="6.500" r="4.700"/><path stroke-linecap="round" d="M10.200 10.200l4.300 4.300"/></g></g></svg>
<svg class="ic" viewBox="0 0 13 13" style="left:1469px;top:259px;width:13px;height:13px;"><g transform="translate(0.95 0.95) scale(0.6562 0.6562) translate(-0.00 -0.00)"><rect fill="#273333" x="0" y="3" width="16" height="10" rx="1.300"/><g fill="#ffffff"><rect x="1.800" y="4.800" width="1.700" height="1.400"/><rect x="4.400" y="4.800" width="1.700" height="1.400"/><rect x="7.100" y="4.800" width="1.700" height="1.400"/><rect x="9.800" y="4.800" width="1.700" height="1.400"/><rect x="12.500" y="4.800" width="1.700" height="1.400"/><rect x="1.800" y="7.300" width="1.700" height="1.400"/><rect x="12.500" y="7.300" width="1.700" height="1.400"/><rect x="4" y="9.900" width="8" height="1.400"/></g></g></svg>
<svg class="ic" viewBox="0 0 13 12" style="left:1469px;top:294px;width:13px;height:12px;"><g transform="translate(0.95 0.45) scale(0.6562 0.6562) translate(-0.00 -0.00)"><circle fill="#273333" cx="8" cy="8" r="7.500"/><path fill="none" stroke="#ffffff" stroke-width="1.800" d="M5.700 6.300c0-1.400 1-2.300 2.400-2.300s2.300.9 2.300 2c0 1.800-2.300 1.700-2.300 3.600"/><circle fill="#ffffff" cx="8.100" cy="11.900" r="1.100"/></g></svg>
<div class="b" style="left:1481.00px;top:51.40px;width:5.00px;height:5.00px;background:#dc3a3a;border-radius:50%"></div>
</aside>
</div></div>
</body>
</html>
